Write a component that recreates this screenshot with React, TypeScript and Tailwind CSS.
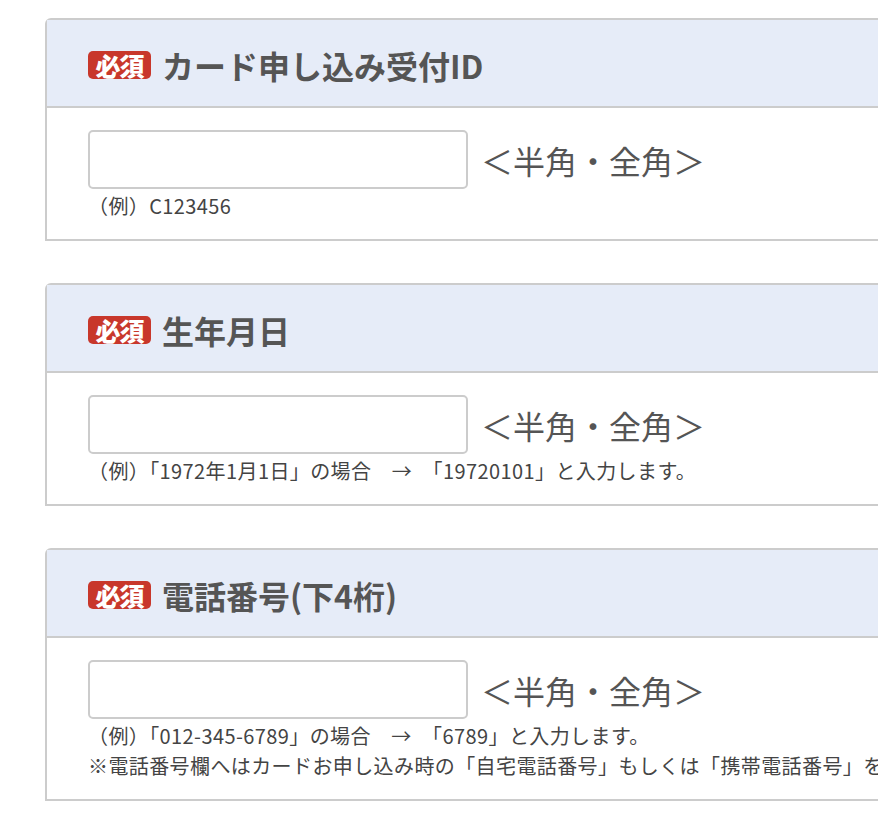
const font = '[font-family:"Noto_Sans_CJK_JP","Noto_Sans",sans-serif]';

function Badge() {
  return (
    <span className="inline-flex h-[28px] w-[63px] items-center justify-center rounded-[5px] bg-[#c8372b] text-[25px] font-black leading-none tracking-[-1px] text-white">
      必須
    </span>
  );
}

function Field({ title, notes }: { title: string; notes: string[] }) {
  return (
    <section className="w-[900px] rounded-tl-[6px] border-2 border-[#cccccc] bg-white">
      <div className="flex h-[88px] items-center gap-[11px] border-b-2 border-[#cccccc] bg-[#e6ecf8] pl-[41px] pt-[4px]">
        <Badge />
        <h2 className="text-[32px] font-bold leading-none text-[#555555]">{title}</h2>
      </div>
      <div className="pl-[41px] pt-[22px] pb-[18px]">
        <div className="flex items-center">
          <input
            type="text"
            className="h-[59px] w-[380px] rounded-[5px] border-2 border-[#cccccc] bg-white px-3 outline-none"
          />
          <span className="ml-[13px] text-[32px] leading-none text-[#555555]">＜半角・全角＞</span>
        </div>
        <div className="mt-[2px] text-[20px] leading-[30px] tracking-[0.4px] text-[#444444] whitespace-nowrap">
          {notes.map((n, i) => (
            <p key={i}>{n}</p>
          ))}
        </div>
      </div>
    </section>
  );
}

export default function App() {
  return (
    <main className={`min-h-screen w-[878px] overflow-hidden bg-white ${font}`}>
      <div className="flex flex-col gap-[42px] pl-[45px] pt-[18px] pb-10">
        <Field title="カード申し込み受付ID" notes={['（例）C123456']} />
        <Field
          title="生年月日"
          notes={['（例）「1972年1月1日」の場合　→　「19720101」と入力します。']}
        />
        <Field
          title="電話番号(下4桁)"
          notes={[
            '（例）「012-345-6789」の場合　→　「6789」と入力します。',
            '※電話番号欄へはカードお申し込み時の「自宅電話番号」もしくは「携帯電話番号」をご入力ください。',
          ]}
        />
      </div>
    </main>
  );
}
